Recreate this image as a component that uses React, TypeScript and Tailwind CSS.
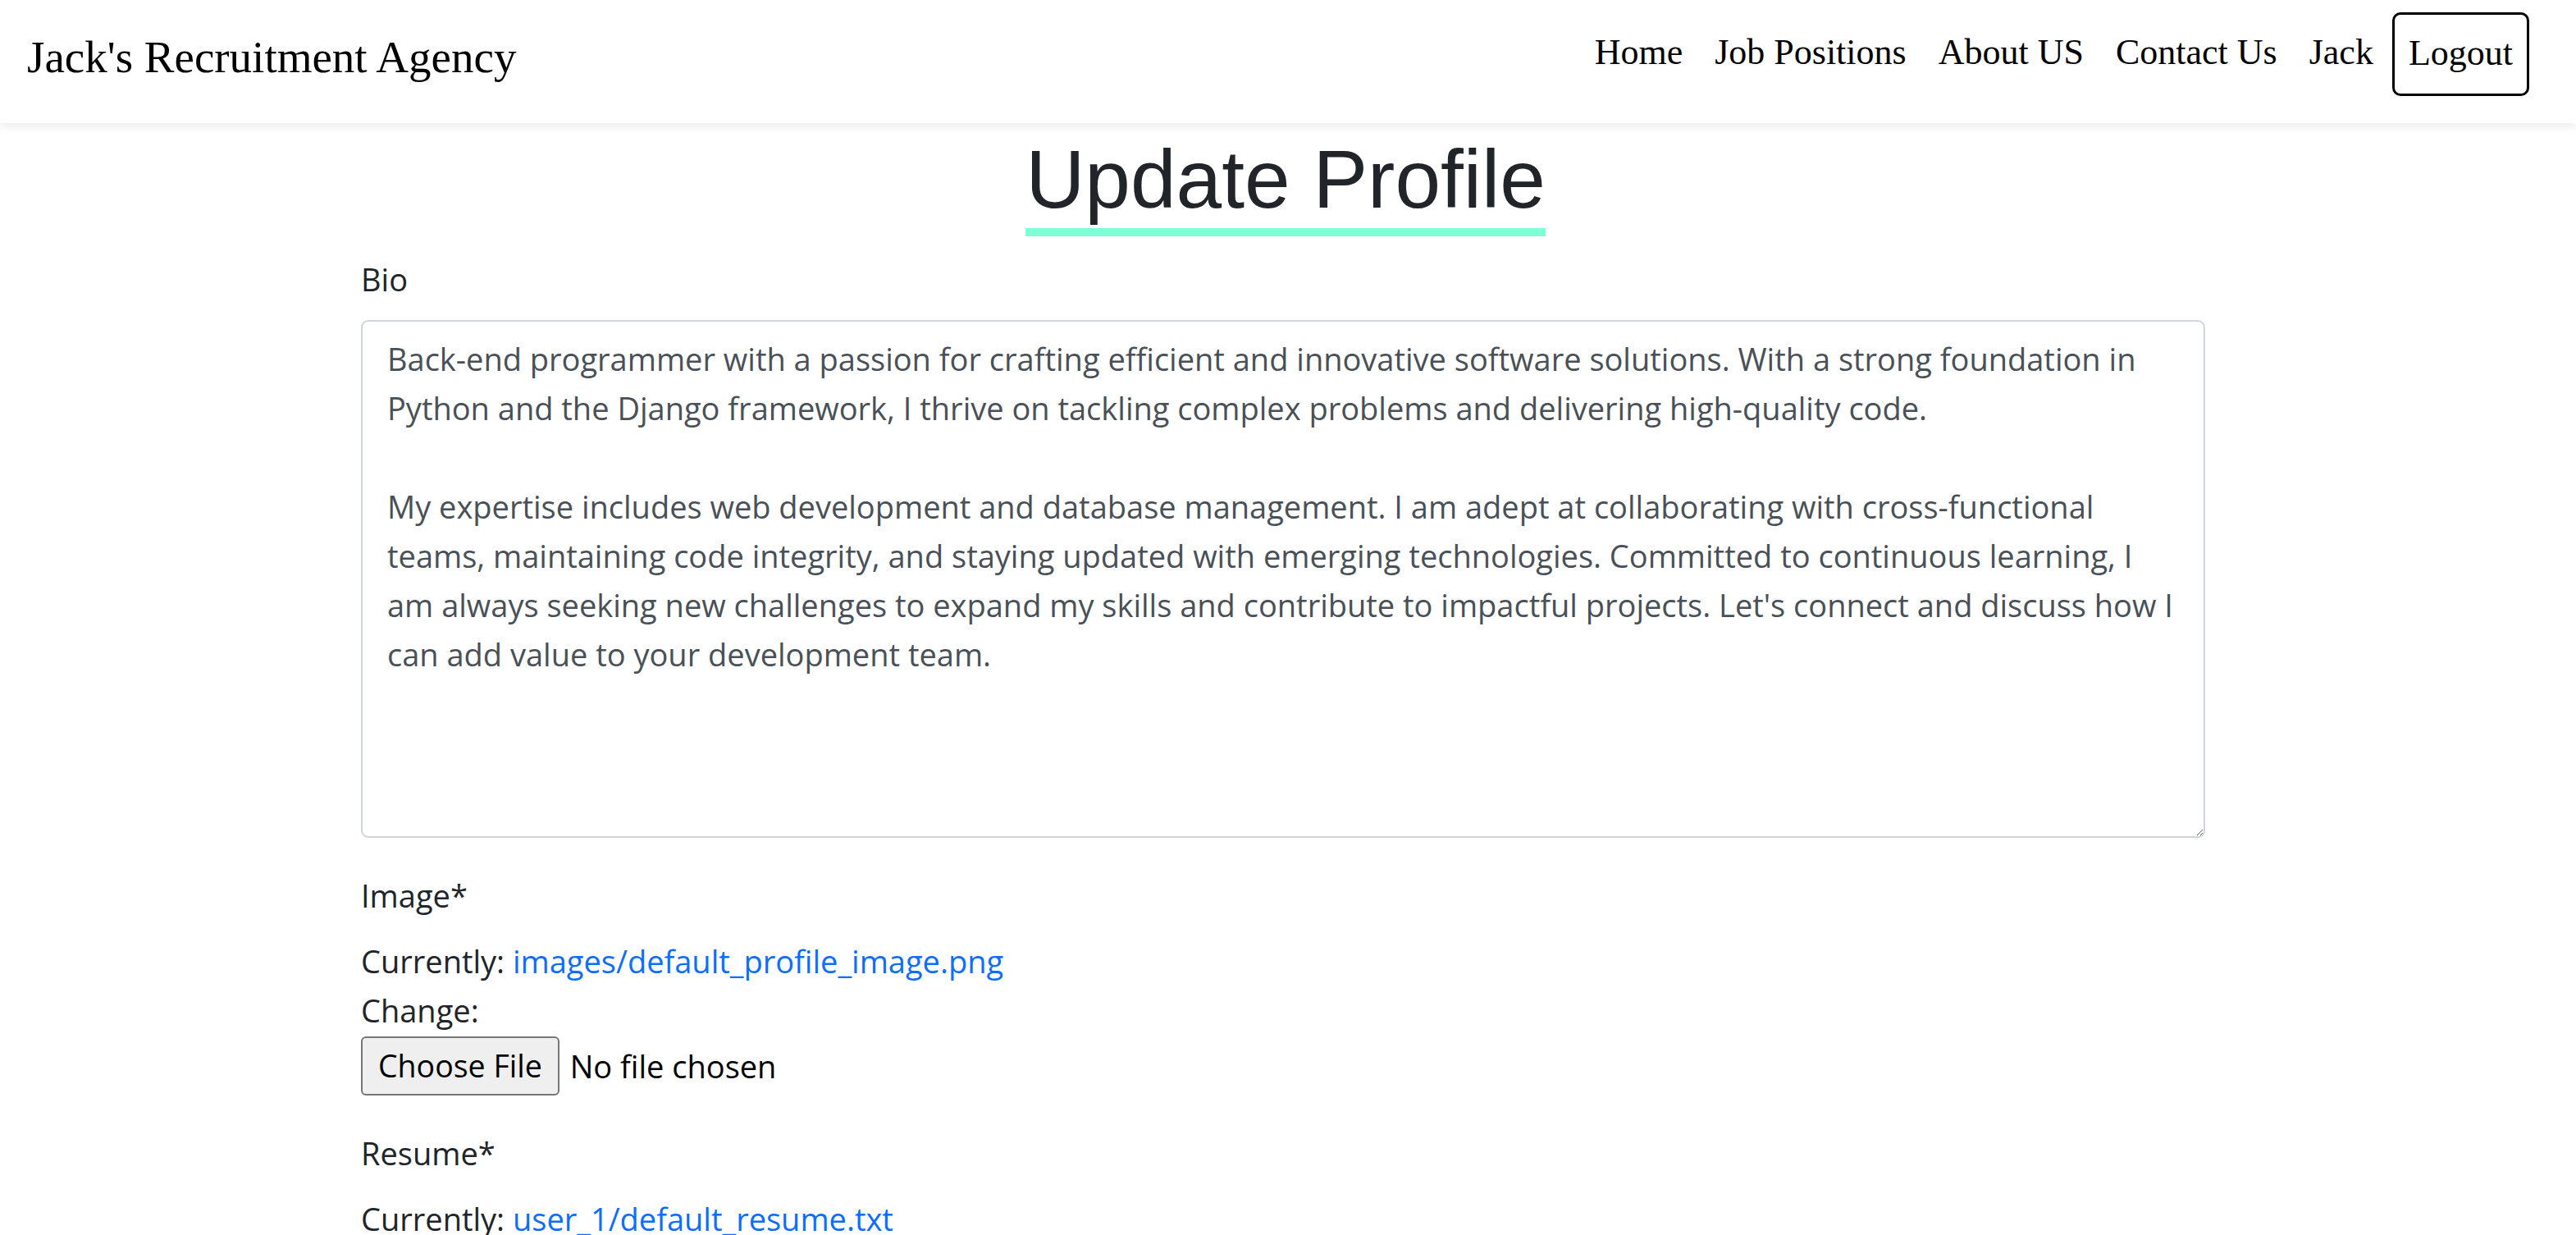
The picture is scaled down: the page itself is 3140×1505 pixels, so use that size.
import React from "react";

const BIO = [
  "Back-end programmer with a passion for crafting efficient and innovative software solutions. With a strong foundation in",
  "Python and the Django framework, I thrive on tackling complex problems and delivering high-quality code.",
  "",
  "My expertise includes web development and database management. I am adept at collaborating with cross-functional",
  "teams, maintaining code integrity, and staying updated with emerging technologies. Committed to continuous learning, I",
  "am always seeking new challenges to expand my skills and contribute to impactful projects. Let's connect and discuss how I",
  "can add value to your development team.",
].join("\n");

const NAV = ["Home", "Job Positions", "About US", "Contact Us", "Jack"];

function FileField({ current }: { current: string }) {
  return (
    <div className="mb-[40px]">
      <div className="leading-[60px]">
        Currently:{" "}
        <a href="#" className="text-[#0d6efd]">
          {current}
        </a>
      </div>
      <div className="leading-[60px]">Change:</div>
      <div className="flex items-center gap-[13px] pt-[2px]">
        <button
          type="button"
          className="h-[72px] rounded-[6px] border-[2.5px] border-[#767676] bg-[#efefef] px-[19px] text-[37.5px] leading-none text-black"
        >
          Choose File
        </button>
        <span className="text-black">No file chosen</span>
      </div>
    </div>
  );
}

export default function App() {
  return (
    <div className="min-h-screen bg-white font-['Open_Sans',sans-serif] text-[38px] text-[#212529]">
      <header className="relative z-10 flex h-[150px] items-start justify-between bg-white shadow-[0_5px_10px_rgba(0,0,0,0.075)] font-['Liberation_Serif',serif] text-black">
        <a href="#" className="ml-[33px] mt-[38px] text-[55px] leading-[64px]">
          Jack's Recruitment Agency
        </a>
        <nav className="mr-[57px] flex items-start">
          <div className="mt-[34px] flex gap-[39px] text-[44px] leading-[60px]">
            {NAV.map((n) => (
              <a key={n} href="#">
                {n}
              </a>
            ))}
          </div>
          <button
            type="button"
            className="ml-[23px] mt-[15px] rounded-[10px] border-[3px] border-black px-[17px] pb-[19px] pt-[17px] text-[44px] leading-[60px]"
          >
            Logout
          </button>
        </nav>
      </header>

      <main className="flex flex-col">
        <div className="flex justify-center pr-[6px] pt-[8px]">
          <h1 className="border-b-[10px] border-[#7fffd4] font-['Liberation_Sans',sans-serif] text-[100px] leading-[120px] text-[#212529]">
            Update Profile
          </h1>
        </div>

        <form className="ml-[440px] mt-[22px] w-[2248px]">
          <div className="mb-[40px]">
            <label className="mb-[20px] block leading-[60px]">Bio</label>
            <textarea
              wrap="off"
              defaultValue={BIO}
              className="block h-[631px] w-full overflow-hidden rounded-[9px] border-[2.5px] border-[#ced4da] px-[30px] pt-[15px] font-['Open_Sans',sans-serif] text-[38px] leading-[60px] text-[#495057] outline-none"
            />
          </div>

          <label className="mb-[20px] block leading-[60px]">Image*</label>
          <FileField current="images/default_profile_image.png" />

          <label className="mb-[20px] block leading-[60px]">Resume*</label>
          <FileField current="user_1/default_resume.txt" />
        </form>
      </main>
    </div>
  );
}
